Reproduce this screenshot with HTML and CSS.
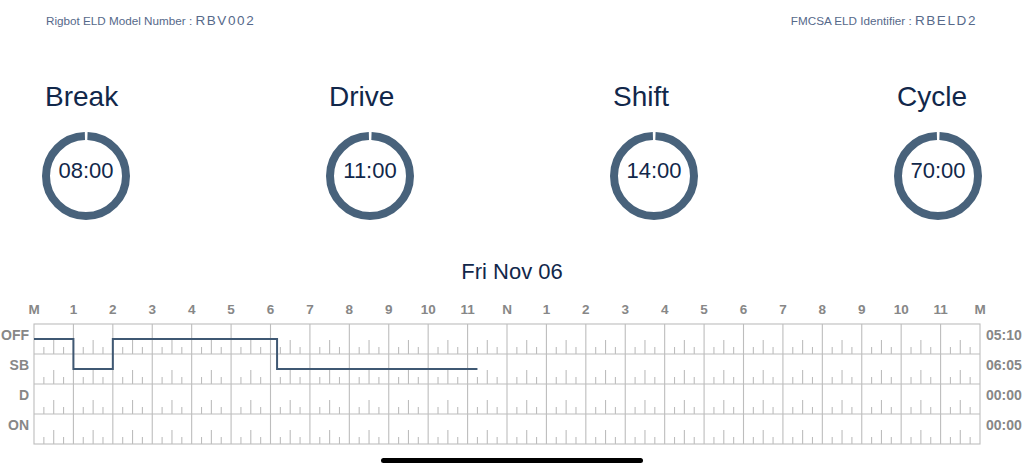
FILE: index.html
```html
<!DOCTYPE html>
<html lang="en">
<head>
<meta charset="utf-8">
<title>Rigbot ELD</title>
<link rel="stylesheet" href="styles.css">
</head>
<body>
<div class="screen">
  <header class="info-bar">
    <div class="info"><span class="info-label">Rigbot ELD Model Number : </span><span class="info-value">RBV002</span></div>
    <div class="info"><span class="info-label">FMCSA ELD Identifier : </span><span class="info-value">RBELD2</span></div>
  </header>

  <section class="gauges">
    <div class="gauge">
      <div class="gauge-title">Break</div>
      <div class="gauge-ring">
        <svg class="ring-svg" width="88" height="88" viewBox="0 0 88 88"><circle cx="44" cy="44" r="40" transform="rotate(-90 44 44)"/></svg>
        <div class="gauge-time">08:00</div>
      </div>
    </div>
    <div class="gauge">
      <div class="gauge-title">Drive</div>
      <div class="gauge-ring">
        <svg class="ring-svg" width="88" height="88" viewBox="0 0 88 88"><circle cx="44" cy="44" r="40" transform="rotate(-90 44 44)"/></svg>
        <div class="gauge-time">11:00</div>
      </div>
    </div>
    <div class="gauge">
      <div class="gauge-title">Shift</div>
      <div class="gauge-ring">
        <svg class="ring-svg" width="88" height="88" viewBox="0 0 88 88"><circle cx="44" cy="44" r="40" transform="rotate(-90 44 44)"/></svg>
        <div class="gauge-time">14:00</div>
      </div>
    </div>
    <div class="gauge">
      <div class="gauge-title">Cycle</div>
      <div class="gauge-ring">
        <svg class="ring-svg" width="88" height="88" viewBox="0 0 88 88"><circle cx="44" cy="44" r="40" transform="rotate(-90 44 44)"/></svg>
        <div class="gauge-time">70:00</div>
      </div>
    </div>
  </section>

  <div class="log-date">Fri Nov 06</div>

  <svg class="log-chart" width="1024" height="160" viewBox="0 0 1024 160">
    <defs>
      <g id="hourTicks">
        <line x1="9.854" y1="23" x2="9.854" y2="30"/>
        <line x1="19.708" y1="16" x2="19.708" y2="30"/>
        <line x1="29.563" y1="23" x2="29.563" y2="30"/>
      </g>
      <g id="rowTicks">
        <use href="#hourTicks" x="0"/>
        <use href="#hourTicks" x="39.417"/>
        <use href="#hourTicks" x="78.833"/>
        <use href="#hourTicks" x="118.25"/>
        <use href="#hourTicks" x="157.667"/>
        <use href="#hourTicks" x="197.083"/>
        <use href="#hourTicks" x="236.5"/>
        <use href="#hourTicks" x="275.917"/>
        <use href="#hourTicks" x="315.333"/>
        <use href="#hourTicks" x="354.75"/>
        <use href="#hourTicks" x="394.167"/>
        <use href="#hourTicks" x="433.583"/>
        <use href="#hourTicks" x="473"/>
        <use href="#hourTicks" x="512.417"/>
        <use href="#hourTicks" x="551.833"/>
        <use href="#hourTicks" x="591.25"/>
        <use href="#hourTicks" x="630.667"/>
        <use href="#hourTicks" x="670.083"/>
        <use href="#hourTicks" x="709.5"/>
        <use href="#hourTicks" x="748.917"/>
        <use href="#hourTicks" x="788.333"/>
        <use href="#hourTicks" x="827.75"/>
        <use href="#hourTicks" x="867.167"/>
        <use href="#hourTicks" x="906.583"/>
      </g>
    </defs>

    <g class="hour-labels">
      <text x="34" y="19">M</text>
      <text x="73.4" y="19">1</text>
      <text x="112.8" y="19">2</text>
      <text x="152.3" y="19">3</text>
      <text x="191.7" y="19">4</text>
      <text x="231.1" y="19">5</text>
      <text x="270.5" y="19">6</text>
      <text x="309.9" y="19">7</text>
      <text x="349.3" y="19">8</text>
      <text x="388.8" y="19">9</text>
      <text x="428.2" y="19">10</text>
      <text x="467.6" y="19">11</text>
      <text x="507" y="19">N</text>
      <text x="546.4" y="19">1</text>
      <text x="585.8" y="19">2</text>
      <text x="625.3" y="19">3</text>
      <text x="664.7" y="19">4</text>
      <text x="704.1" y="19">5</text>
      <text x="743.5" y="19">6</text>
      <text x="782.9" y="19">7</text>
      <text x="822.3" y="19">8</text>
      <text x="861.8" y="19">9</text>
      <text x="901.2" y="19">10</text>
      <text x="940.6" y="19">11</text>
      <text x="980" y="19">M</text>
    </g>

    <g class="status-labels">
      <text x="29" y="45">OFF</text>
      <text x="29" y="75">SB</text>
      <text x="29" y="105">D</text>
      <text x="29" y="135">ON</text>
    </g>

    <g class="total-labels">
      <text x="986" y="45">05:10</text>
      <text x="986" y="75">06:05</text>
      <text x="986" y="105">00:00</text>
      <text x="986" y="135">00:00</text>
    </g>

    <g class="grid" transform="translate(34,29)">
      <use href="#rowTicks" y="0"/>
      <use href="#rowTicks" y="30"/>
      <use href="#rowTicks" y="60"/>
      <use href="#rowTicks" y="90"/>
      <line x1="0" y1="30" x2="946" y2="30"/>
      <line x1="0" y1="60" x2="946" y2="60"/>
      <line x1="0" y1="90" x2="946" y2="90"/>
      <line x1="39.417" y1="0" x2="39.417" y2="120"/>
      <line x1="78.833" y1="0" x2="78.833" y2="120"/>
      <line x1="118.25" y1="0" x2="118.25" y2="120"/>
      <line x1="157.667" y1="0" x2="157.667" y2="120"/>
      <line x1="197.083" y1="0" x2="197.083" y2="120"/>
      <line x1="236.5" y1="0" x2="236.5" y2="120"/>
      <line x1="275.917" y1="0" x2="275.917" y2="120"/>
      <line x1="315.333" y1="0" x2="315.333" y2="120"/>
      <line x1="354.75" y1="0" x2="354.75" y2="120"/>
      <line x1="394.167" y1="0" x2="394.167" y2="120"/>
      <line x1="433.583" y1="0" x2="433.583" y2="120"/>
      <line x1="473" y1="0" x2="473" y2="120"/>
      <line x1="512.417" y1="0" x2="512.417" y2="120"/>
      <line x1="551.833" y1="0" x2="551.833" y2="120"/>
      <line x1="591.25" y1="0" x2="591.25" y2="120"/>
      <line x1="630.667" y1="0" x2="630.667" y2="120"/>
      <line x1="670.083" y1="0" x2="670.083" y2="120"/>
      <line x1="709.5" y1="0" x2="709.5" y2="120"/>
      <line x1="748.917" y1="0" x2="748.917" y2="120"/>
      <line x1="788.333" y1="0" x2="788.333" y2="120"/>
      <line x1="827.75" y1="0" x2="827.75" y2="120"/>
      <line x1="867.167" y1="0" x2="867.167" y2="120"/>
      <line x1="906.583" y1="0" x2="906.583" y2="120"/>
      <rect x="0" y="0" width="946" height="120"/>
    </g>

    <path class="status-line" transform="translate(34,29)" d="M0 15 H39.417 V45 H78.833 V15 H243.07 V45 H443.44"/>
  </svg>

  <div class="home-indicator"></div>
</div>
</body>
</html>
```

FILE: styles.css
```css
* {
  box-sizing: border-box;
}

html, body {
  margin: 0;
  padding: 0;
  background: #ffffff;
}

body {
  font-family: "Liberation Sans", Arial, sans-serif;
  width: 1024px;
  height: 473px;
  overflow: hidden;
}

.screen {
  display: flex;
  flex-direction: column;
  width: 1024px;
  height: 473px;
}

.info-bar {
  display: flex;
  justify-content: space-between;
  align-items: baseline;
  padding: 12px 47px 0 46px;
  height: 28px;
  line-height: 16px;
  color: #56698a;
}

.info-label {
  font-size: 11.7px;
}

.info-value {
  font-size: 13.5px;
  letter-spacing: 1.6px;
}

.gauges {
  display: flex;
  justify-content: space-between;
  padding: 0 42px;
  margin-top: 53px;
}

.gauge {
  display: flex;
  flex-direction: column;
  width: 88px;
}

.gauge-title {
  font-size: 28px;
  line-height: 32px;
  color: #11274a;
  margin-left: 3px;
  white-space: nowrap;
}

.gauge-ring {
  display: grid;
  width: 88px;
  height: 88px;
  margin-top: 19px;
}

.ring-svg {
  grid-area: 1 / 1;
  display: block;
}

.ring-svg circle {
  fill: none;
  stroke: #48627b;
  stroke-width: 8;
  stroke-dasharray: 248.3 3;
  stroke-dashoffset: -1.5;
}

.gauge-time {
  grid-area: 1 / 1;
  justify-self: center;
  align-self: start;
  margin-top: 26px;
  font-size: 22px;
  line-height: 26px;
  color: #11274a;
}

.log-date {
  margin-top: 39px;
  text-align: center;
  font-size: 22px;
  line-height: 26px;
  color: #11274a;
}

.log-chart {
  display: block;
  margin-top: 10px;
  flex: none;
}

.log-chart text {
  font-family: "Liberation Sans", Arial, sans-serif;
  font-weight: bold;
  fill: #878787;
}

.hour-labels text {
  font-size: 13.5px;
  text-anchor: middle;
}

.status-labels text {
  font-size: 14px;
  text-anchor: end;
}

.total-labels text {
  font-size: 14px;
  text-anchor: start;
}

.grid line,
.grid rect,
#hourTicks line {
  fill: none;
  stroke: #bdbdbd;
  stroke-width: 1.1;
}

.status-line {
  fill: none;
  stroke: #3f5873;
  stroke-width: 2;
}

.home-indicator {
  align-self: center;
  width: 262px;
  height: 5px;
  margin-top: 3px;
  border-radius: 3px;
  background: #000000;
}
```
